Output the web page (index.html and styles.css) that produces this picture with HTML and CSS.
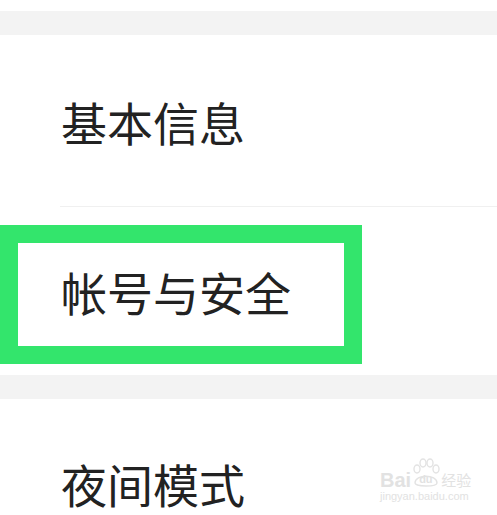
FILE: index.html
```html
<!DOCTYPE html>
<html lang="zh-CN">
<head>
  <meta charset="UTF-8">
  <title>设置</title>
  <meta name="viewport" content="width=device-width, initial-scale=1.0">
  <link rel="stylesheet" href="styles.css">
</head>
<body>
  <div class="top-space"></div>
  <div class="band"></div>

  <div class="group">
    <div class="item divided"><span>基本信息</span></div>
    <div class="item"><span>帐号与安全</span></div>
  </div>

  <div class="band"></div>

  <div class="group">
    <div class="item last"><span>夜间模式</span></div>
  </div>

  <!-- highlight annotation -->
  <div class="highlight"></div>

  <div class="watermark">
    <div class="wm-logo">
      <span class="wm-bai">Bai</span>
      <span class="wm-pawbox">
        <svg class="wm-paw" width="28" height="30" viewBox="0 0 28 30">
          <ellipse cx="5" cy="11" rx="3" ry="4" fill="none" stroke="#e3e3e3" stroke-width="1.4"/>
          <ellipse cx="11" cy="5" rx="3" ry="4" fill="none" stroke="#e3e3e3" stroke-width="1.4"/>
          <ellipse cx="18" cy="5" rx="3" ry="4" fill="none" stroke="#e3e3e3" stroke-width="1.4"/>
          <ellipse cx="24" cy="11" rx="3" ry="4" fill="none" stroke="#e3e3e3" stroke-width="1.4"/>
          <path d="M3 25 C3 16 25 16 25 25 C25 29 3 29 3 25 Z" fill="none" stroke="#e3e3e3" stroke-width="1.4"/>
        </svg>
        <span class="wm-du">du</span>
      </span>
      <span class="wm-jy">经验</span>
    </div>
    <div class="wm-url">jingyan.baidu.com</div>
  </div>
</body>
</html>
```

FILE: styles.css
```css
/* Reset */
* {
  margin: 0;
  padding: 0;
  box-sizing: border-box;
}

body {
  background: #ffffff;
  font-family: "Noto Sans CJK SC", "Noto Sans", sans-serif;
  color: #222222;
  width: 497px;
  height: 515px;
  overflow: hidden;
  position: relative;
}

.top-space {
  height: 11px;
}

.band {
  height: 24px;
  background: #f3f3f3;
}

/* List items */
.item {
  margin-left: 60px;
  height: 168px;
  display: flex;
  align-items: center;
  font-size: 46px;
}

.item span {
  margin-left: 1px;
}

.item.divided {
  height: 172px;
  border-bottom: 1px solid #f0f0f0;
}

.item.last {
  height: 116px;
  align-items: flex-start;
  padding-top: 51px;
}

/* Green annotation box */
.highlight {
  position: absolute;
  left: 0;
  top: 225px;
  width: 362px;
  height: 139px;
  border: 18px solid #33e56c;
}

/* Watermark */
.watermark {
  position: absolute;
  left: 380px;
  top: 458px;
  color: #e2e2e2;
  font-family: "Liberation Sans", sans-serif;
}

.wm-logo {
  display: flex;
  align-items: flex-end;
  height: 30px;
}

.wm-bai {
  font-size: 20px;
  font-weight: bold;
  line-height: 16px;
}

.wm-pawbox {
  position: relative;
  width: 28px;
  height: 30px;
  margin-left: 1px;
}

.wm-paw {
  display: block;
}

.wm-du {
  position: absolute;
  left: 7px;
  top: 16px;
  font-size: 11px;
  font-weight: bold;
  line-height: 11px;
}

.wm-jy {
  font-family: "Noto Sans CJK SC", sans-serif;
  font-size: 15px;
  line-height: 17px;
  margin-left: 1px;
}

.wm-url {
  font-size: 11px;
  margin-top: 2px;
}
```
